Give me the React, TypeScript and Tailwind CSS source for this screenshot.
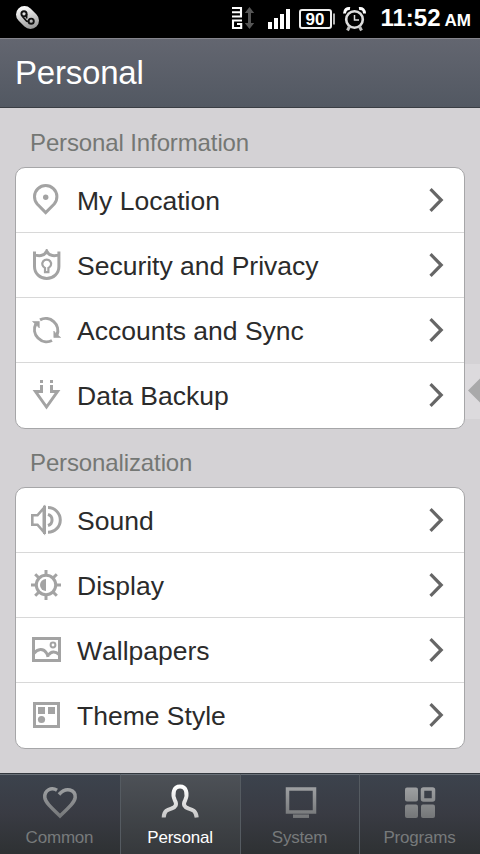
import { ReactNode } from "react";

type Item = { label: string; icon: ReactNode };

const personalInfo: Item[] = [
    {
        label: "My Location",
        icon: (
            <>
                <path d="M15.7 28.6 7.2 20A11.2 11.2 0 1 1 24.2 20Z" />
                <circle cx="15.7" cy="13.2" r="2.7" fill="#a3a3a3" stroke="none" />
            </>
        ),
    },
    {
        label: "Security and Privacy",
        icon: (
            <>
                <path d="M4.5 2.500V17.500C4.500 24.500 10 29.500 16.700 29.500S28.900 24.500 28.900 17.500V2.500M4 5.300C8 7.500 14.500 7.500 16.700 2.200 18.900 7.500 25.500 7.500 29.400 5.300" />
                <path d="M15 23.200v-4.200a4.400 4.400 0 1 1 3.400 0v4.200Z" strokeWidth="2.200" />
            </>
        ),
    },
    {
        label: "Accounts and Sync",
        icon: (
            <>
                <path d="M10 5.800A12.200 12.200 0 0 1 27 21M22 26.500A12.200 12.200 0 0 1 5.800 10" />
                <path d="M2.500 7.500H9.300V14L7 11.500ZM30.700 23.500H23.800V17L26 19.500Z" fill="#a3a3a3" strokeWidth="0.600" />
            </>
        ),
    },
    {
        label: "Data Backup",
        icon: (
            <>
                <path d="M11.500 6v6.500H5.500L16.500 28 27.500 12.500H21.500V6" />
                <path d="M10 2.500h3M20 2.500h3" />
            </>
        ),
    },
];

const personalization: Item[] = [
    {
        label: "Sound",
        icon: (
            <>
                <path d="M13.800 4 7.500 11.300H2.300v9.400h5.200L13.800 28Z" strokeWidth="2.600" />
                <path d="M14.500 1.700v28.300" />
                <path d="M18 3.600a12.300 12.300 0 0 1 0 24.600M18 10.300a5.900 5.900 0 0 1 0 11.200" />
            </>
        ),
    },
    {
        label: "Display",
        icon: (
            <>
                <circle cx="16" cy="16" r="9.700" />
                <path d="M16 1v5M16 26v5M1 16h5M26 16h5M5.200 5.200l3.800 3.800M23 23l3.800 3.800M5.200 26.800 9 23M23 9l3.800-3.800" />
                <path d="M16 10v12a6 6 0 0 1 0-12Z" fill="#a3a3a3" stroke="none" />
            </>
        ),
    },
    {
        label: "Wallpapers",
        icon: (
            <>
                <path d="M3.500 4.500h26v22h-26Z" />
                <path d="M4 19.500c3.500-5 9.500-5.500 12.500-.5 1 1.500 1.300 2 1.500 4M18.500 21c2.500-4 7-4 10.500-.5" />
                <circle cx="23" cy="11" r="2.400" strokeWidth="2" />
            </>
        ),
    },
    {
        label: "Theme Style",
        icon: (
            <>
                <path d="M4.500 4.500h24v23h-24Z" />
                <path d="M8 8h7v7H8ZM18 8h7v7h-7Z" fill="#a3a3a3" stroke="none" />
                <circle cx="11.500" cy="20.500" r="3.600" fill="#a3a3a3" stroke="none" />
            </>
        ),
    },
];

const tabs: Item[] = [
    {
        label: "Common",
        icon: <path d="M17 4.300C11.500 .8 4.300 4 4.800 11.500 5.300 16 10 20.500 20 30 30 20.500 34.700 16 35.200 11.500 35.700 3.500 26 .5 19 8.500" />,
    },
    {
        label: "Personal",
        icon: <path d="M3.700 31.500C4 24.500 8 23.500 11.500 22.500 15.500 21.500 17.300 18.500 14.900 14.500 12 8 13.500 0.500 20 0.500S28 8 25.100 14.500C22.700 18.500 24.500 21.500 28.500 22.500 32 23.500 36 24.500 36.700 31.500" />,
    },
    {
        label: "System",
        icon: (
            <>
                <path d="M7.500 3h27v23h-27Z" />
                <path d="M13 30.200h16" />
            </>
        ),
    },
    {
        label: "Programs",
        icon: (
            <>
                <g fill="url(#tabOff)" stroke="none">
                    <rect x="5" y="1.500" width="13" height="14" rx="2" />
                    <rect x="5" y="18.500" width="13" height="13.500" rx="2" />
                    <rect x="21" y="18.500" width="14" height="13.500" rx="2" />
                </g>
                <rect x="22.500" y="3" width="11" height="11" rx="1" />
            </>
        ),
    },
];

function StatusBar() {
    return (
        <div className="h-[38px] bg-black flex items-start shrink-0">
            <svg width="370" height="38" viewBox="0 0 370 38" fill="none">
                <defs>
                    <linearGradient id="pill" gradientUnits="userSpaceOnUse" x1="24" y1="6" x2="30" y2="29">
                        <stop offset="0" stopColor="#fff" />
                        <stop offset="1" stopColor="#999" />
                    </linearGradient>
                </defs>
                <path d="M24.500 14.500 30.500 20.500" stroke="url(#pill)" strokeWidth="17" strokeLinecap="round" />
                <circle cx="24" cy="13.800" r="2.600" stroke="#111" strokeWidth="1.900" />
                <circle cx="31.200" cy="21.200" r="2.600" stroke="#111" strokeWidth="1.900" />
                <path d="M26.600 14V18.500M22.500 16.500 26 20.500C27 21.800 28 21.500 29 21" stroke="#111" strokeWidth="1.700" />
                <path d="M232 8h9v8.500M232 12.200h9M232 16.500h10M242 20.500h-9v7.500h8.200v-4h-4.200" stroke="#fff" strokeWidth="2.100" />
                <path d="M249.500 11v14" stroke="#555" strokeWidth="3" />
                <path d="M244.800 13 249.500 7 254.200 13ZM244.800 23 249.500 29 254.200 23Z" fill="#555" />
                <path d="M268 22h4v7h-4ZM274 18h4v11h-4ZM280 14h4v15h-4ZM286 9h4v20h-4Z" fill="#fff" />
                <rect x="300" y="10" width="31" height="18" rx="2" stroke="#eee" strokeWidth="2" />
                <path d="M334 13.500v11" stroke="#eee" strokeWidth="1.500" />
                <text x="315" y="25" fill="#fff" fontSize="17" fontWeight="700" textAnchor="middle" className="font-['Liberation_Sans',Arial,sans-serif]">90</text>
                <circle cx="354.500" cy="19.500" r="8.300" stroke="#ddd" strokeWidth="2.600" />
                <path d="M354.500 15v5h4.500" stroke="#ddd" strokeWidth="1.500" />
                <path d="M344.500 13.500C344.500 10 347 8 350 8.500M359 8.500C362.500 8 364.500 10 364.500 13.500" stroke="#fff" strokeWidth="3" />
                <path d="M349.500 26.500 347.500 30.500M359.500 26.500 361.500 30.500" stroke="#bbb" strokeWidth="3" />
            </svg>
            <div className="flex-1 flex items-baseline justify-end pr-[9px] font-bold text-white leading-[36px] whitespace-nowrap">
                <span className="text-[24px]">11:52</span>
                <span className="text-[17px] ml-[4px]">AM</span>
            </div>
        </div>
    );
}

function Section({ title, items }: { title: string; items: Item[] }) {
    return (
        <section className="mb-[-1px]">
            <h2 className="h-[59px] pt-[17px] pl-[15px] text-[24px] leading-[36px] tracking-[-0.12px] text-[#747774]">{title}</h2>
            <ul className="bg-white border border-[#a6a6a8] rounded-[10px]">
                {items.map(({ label, icon }) => (
                    <li key={label} className="h-[65px] flex items-center pl-[14px] pr-[20px] border-b border-[#d8d8d8] last:border-transparent">
                        <svg width="32" height="32" viewBox="0 0 32 32" fill="none" stroke="#a3a3a3" strokeWidth="3">
                            {icon}
                        </svg>
                        <span className="flex-1 ml-[15px] pt-[2px] text-[26.5px] leading-8 text-[#2b2b2b] whitespace-nowrap [font-kerning:none]">{label}</span>
                        <svg width="15" height="24" viewBox="0 0 15 24" fill="none" stroke="#666" strokeWidth="3.200">
                            <path d="M1.500 1.200 12.200 12 1.500 22.800" />
                        </svg>
                    </li>
                ))}
            </ul>
        </section>
    );
}

export default function App() {
    const active = "Personal";

    return (
        <div className="relative w-[480px] h-[854px] overflow-hidden flex flex-col bg-[#d4d2d5] font-['Liberation_Sans',Arial,sans-serif]">
            <StatusBar />
            <header className="h-[70px] shrink-0 flex items-center pl-[15px] bg-gradient-to-b from-[#636670] to-[#525862] border-t border-t-[#85858c] border-b border-b-[#393d43]">
                <h1 className="text-[33px] leading-[40px] tracking-[-0.2px] text-white">Personal</h1>
            </header>

            <main className="flex-1 px-[15px]">
                <Section title="Personal Information" items={personalInfo} />
                <Section title="Personalization" items={personalization} />
            </main>

            {/* Edge handle floating above the list */}
            <div className="absolute right-0 top-[364px] w-[15px] h-[55px] bg-[#dcdadd]">
                <svg width="15" height="55" viewBox="0 0 15 55">
                    <path d="M3 26.500 15 14.500V38.500Z" fill="#a9a9aa" />
                </svg>
            </div>

            <nav className="h-[81px] shrink-0 grid grid-cols-[120px_120px_119px_121px] border-t border-[#33383e] bg-gradient-to-b from-[#3c434d] via-[#393b43] to-[#2e3133]">
                {tabs.map(({ label, icon }, i) => {
                    const on = label === active;
                    return (
                        <button
                            key={label}
                            className={`flex flex-col items-center pt-[11px] pr-px border-t border-t-[#697078] ${i > 0 ? "border-l border-l-[#555b61]" : ""} ${on ? "bg-gradient-to-b from-[#4d5157] to-[#36393c] text-white" : "text-[#777a7b]"}`}
                        >
                            <svg className="overflow-visible" width="40" height="34" viewBox="0 0 40 34" fill="none" stroke={on ? "url(#tabOn)" : "url(#tabOff)"} strokeWidth={on ? 4 : 3.5}>
                                <defs>
                                    <linearGradient id="tabOn" gradientUnits="userSpaceOnUse" x1="0" y1="0" x2="0" y2="32">
                                        <stop offset="0" stopColor="#fff" />
                                        <stop offset="1" stopColor="#c5c5c5" />
                                    </linearGradient>
                                    <linearGradient id="tabOff" gradientUnits="userSpaceOnUse" x1="0" y1="0" x2="0" y2="32">
                                        <stop offset="0" stopColor="#a0a2a4" />
                                        <stop offset="1" stopColor="#747678" />
                                    </linearGradient>
                                </defs>
                                {icon}
                            </svg>
                            <span className="mt-[8px] text-[17px] leading-5 tracking-[-0.2px]">{label}</span>
                        </button>
                    );
                })}
            </nav>
        </div>
    );
}
